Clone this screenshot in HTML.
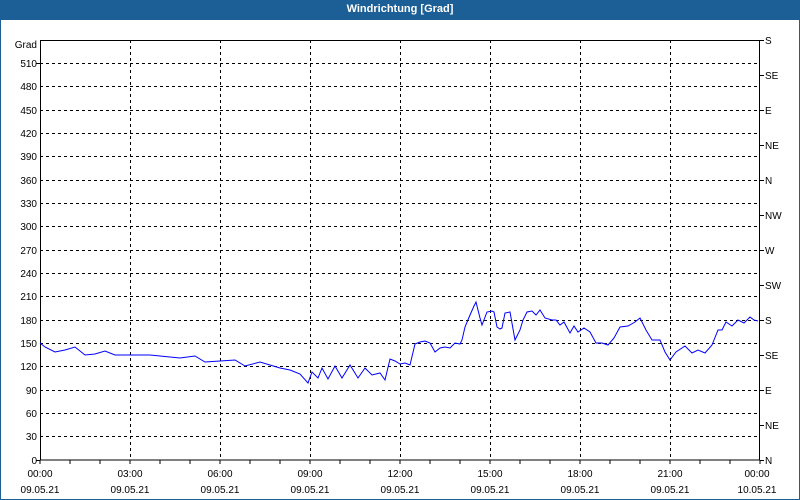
<!DOCTYPE html>
<html><head><style>
body{margin:0;width:800px;height:500px;background:#fff;font-family:"Liberation Sans",sans-serif;overflow:hidden}
.wrap{position:absolute;left:0;top:0;width:798px;height:499px;border:1px solid #1c5f96;border-top:none}
.title{position:absolute;left:0;top:0;width:800px;height:20px;background:#1c5f96;color:#fff;font-size:11px;font-weight:bold;text-align:center;line-height:19px}
svg{position:absolute;left:0;top:0}
text{font-family:"Liberation Sans",sans-serif;font-size:10px;fill:#000}
</style></head><body>
<div class="wrap"></div>
<div class="title">Windrichtung [Grad]</div>
<svg width="800" height="500">
<g stroke="#000" stroke-dasharray="3,3" stroke-width="1">
<line x1="40" y1="63.5" x2="760" y2="63.5"/><line x1="40" y1="86.5" x2="760" y2="86.5"/><line x1="40" y1="110.5" x2="760" y2="110.5"/><line x1="40" y1="133.5" x2="760" y2="133.5"/><line x1="40" y1="156.5" x2="760" y2="156.5"/><line x1="40" y1="180.5" x2="760" y2="180.5"/><line x1="40" y1="203.5" x2="760" y2="203.5"/><line x1="40" y1="226.5" x2="760" y2="226.5"/><line x1="40" y1="250.5" x2="760" y2="250.5"/><line x1="40" y1="273.5" x2="760" y2="273.5"/><line x1="40" y1="296.5" x2="760" y2="296.5"/><line x1="40" y1="320.5" x2="760" y2="320.5"/><line x1="40" y1="343.5" x2="760" y2="343.5"/><line x1="40" y1="366.5" x2="760" y2="366.5"/><line x1="40" y1="390.5" x2="760" y2="390.5"/><line x1="40" y1="413.5" x2="760" y2="413.5"/><line x1="40" y1="436.5" x2="760" y2="436.5"/>
<line x1="130.5" y1="40" x2="130.5" y2="460"/><line x1="220.5" y1="40" x2="220.5" y2="460"/><line x1="310.5" y1="40" x2="310.5" y2="460"/><line x1="400.5" y1="40" x2="400.5" y2="460"/><line x1="490.5" y1="40" x2="490.5" y2="460"/><line x1="580.5" y1="40" x2="580.5" y2="460"/><line x1="670.5" y1="40" x2="670.5" y2="460"/>
</g>
<rect x="40.5" y="40.5" width="719" height="419.5" fill="none" stroke="#000"/>
<g stroke="#000">
<path d="M70 460v4M100 460v4M130 460v4M160 460v4M190 460v4M220 460v4M250 460v4M280 460v4M310 460v4M340 460v4M370 460v4M400 460v4M430 460v4M460 460v4M490 460v4M520 460v4M550 460v4M580 460v4M610 460v4M640 460v4M670 460v4M700 460v4M730 460v4M40 460v4M760 460v4"/>
<path d="M760 40.5h4M760 75.5h4M760 110.5h4M760 145.5h4M760 180.5h4M760 215.5h4M760 250.5h4M760 285.5h4M760 320.5h4M760 355.5h4M760 390.5h4M760 425.5h4M760 460.5h4M36 63.5h4M36 460.5h4"/>
</g>
<polyline fill="none" stroke="#0000ff" stroke-width="1" points="40,343 45,347 55,352 65,350 75,347 85,355 95,354 105,351 115,355 130,355 150,355 170,357 180,358 195,356 205,362 220,361 235,360 245,366 260,362 270,365 280,368 290,370 300,374 308,383 312,372 318,378 322,368 328,379 335,366 342,378 350,365 358,378 365,368 372,375 380,373 385,380 390,359 395,361 400,364 405,363 410,365 415,344 420,342 425,341 430,343 435,352 440,348 445,347 450,348 455,343 460,344 462,340 465,327 470,315 474,306 476,302 480,318 482,325 487,312 492,311 494,312 497,327 500,329 502,328 505,313 510,312 515,340 520,330 523,320 527,312 532,311 536,315 540,310 545,318 552,320 556,320 560,325 564,322 570,333 574,326 578,332 584,328 590,332 596,343 602,343 608,345 614,338 620,327 628,326 635,322 640,318 646,330 652,340 660,340 665,352 670,360 676,352 685,346 692,353 698,350 705,353 712,345 718,330 722,330 726,322 732,326 738,320 744,323 750,317 754,320 758,321"/>
<g text-anchor="end">
<text x="37" y="48">Grad</text>
<text x="37" y="67">510</text><text x="37" y="90">480</text><text x="37" y="114">450</text><text x="37" y="137">420</text><text x="37" y="160">390</text><text x="37" y="184">360</text><text x="37" y="207">330</text><text x="37" y="230">300</text><text x="37" y="254">270</text><text x="37" y="277">240</text><text x="37" y="300">210</text><text x="37" y="324">180</text><text x="37" y="347">150</text><text x="37" y="370">120</text><text x="37" y="394">90</text><text x="37" y="417">60</text><text x="37" y="440">30</text><text x="37" y="464">0</text>
</g>
<g>
<text x="765" y="44">S</text><text x="765" y="79">SE</text><text x="765" y="114">E</text><text x="765" y="149">NE</text><text x="765" y="184">N</text><text x="765" y="219">NW</text><text x="765" y="254">W</text><text x="765" y="289">SW</text><text x="765" y="324">S</text><text x="765" y="359">SE</text><text x="765" y="394">E</text><text x="765" y="429">NE</text><text x="765" y="464">N</text>
</g>
<g text-anchor="middle">
<text x="40" y="477">00:00</text><text x="40" y="493">09.05.21</text>
<text x="130" y="477">03:00</text><text x="130" y="493">09.05.21</text>
<text x="220" y="477">06:00</text><text x="220" y="493">09.05.21</text>
<text x="310" y="477">09:00</text><text x="310" y="493">09.05.21</text>
<text x="400" y="477">12:00</text><text x="400" y="493">09.05.21</text>
<text x="490" y="477">15:00</text><text x="490" y="493">09.05.21</text>
<text x="580" y="477">18:00</text><text x="580" y="493">09.05.21</text>
<text x="670" y="477">21:00</text><text x="670" y="493">09.05.21</text>
<text x="757" y="477">00:00</text><text x="757" y="493">10.05.21</text>
</g>
</svg>
</body></html>
